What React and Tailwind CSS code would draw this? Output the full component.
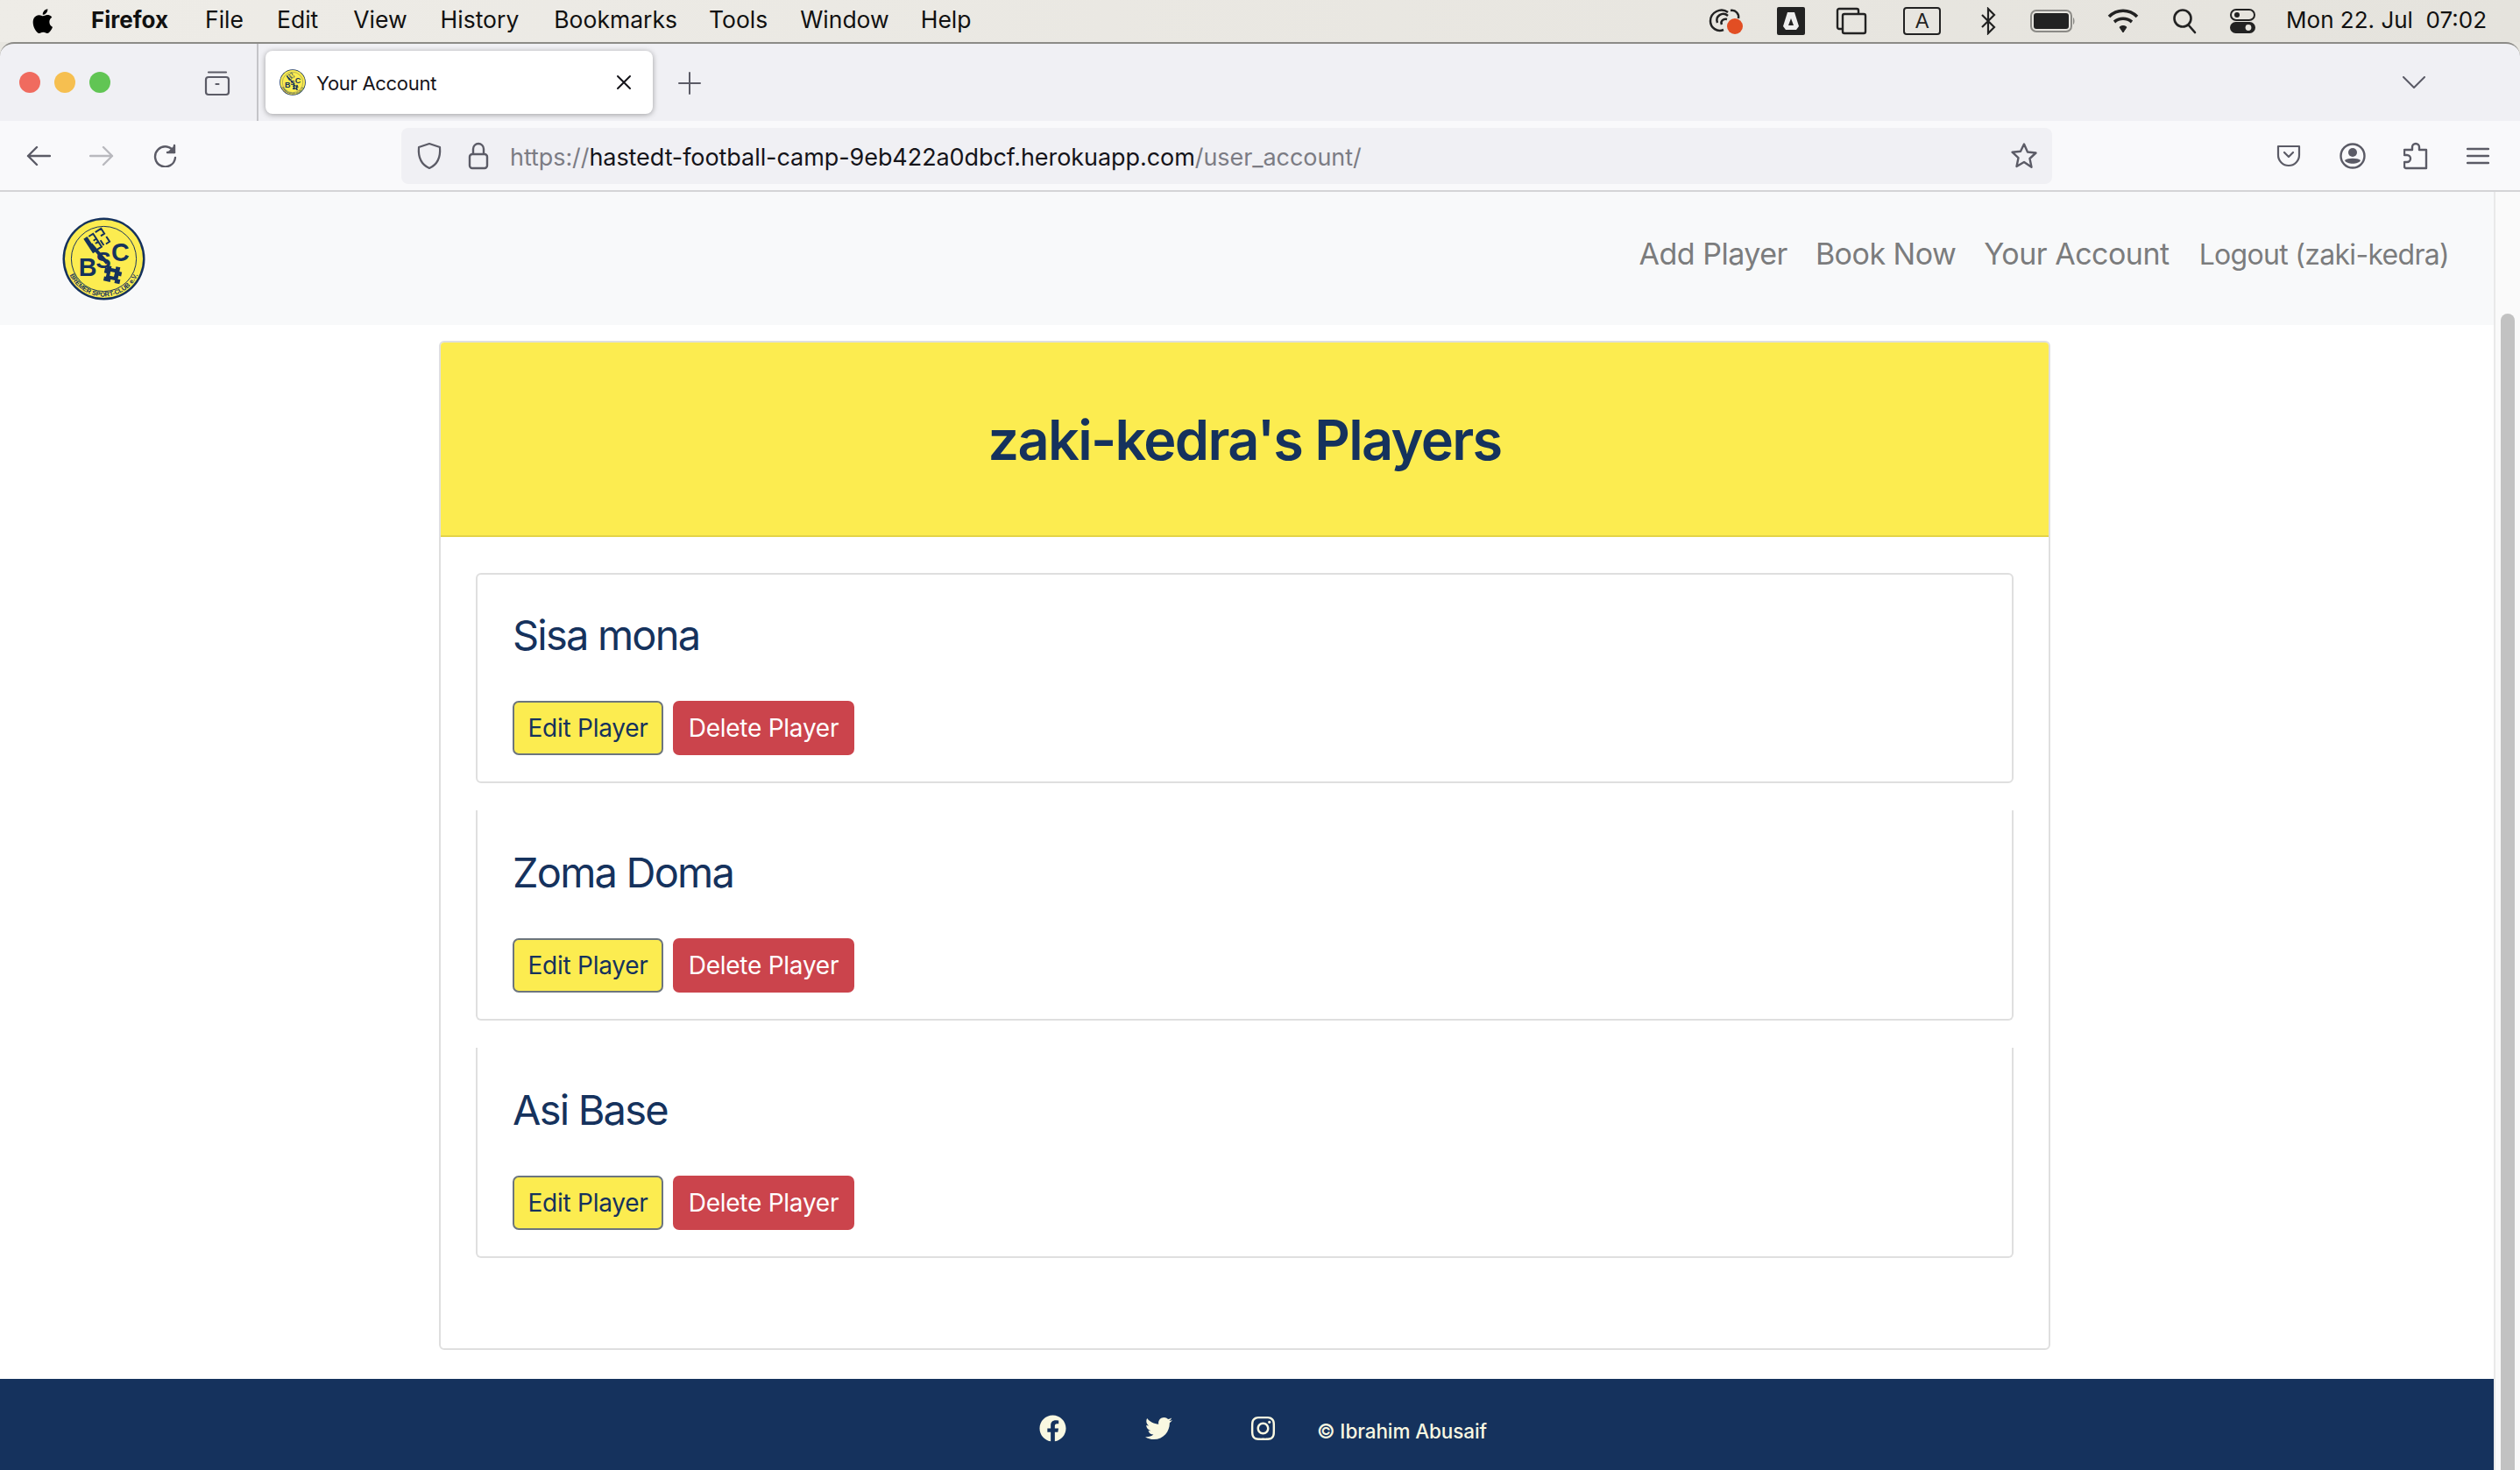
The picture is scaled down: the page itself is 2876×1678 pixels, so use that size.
import React from "react";
import {FaFacebook, FaInstagram, FaTwitter} from "react-icons/fa";

const navy = "#15325d";
const yellow = "#fcec50";

function Logo({size}) {
    return (
        <svg width={size} height={size} viewBox="0 0 96 96" className="shrink-0">
            <circle cx="48" cy="48" r="47.5" fill={navy} />
            <circle cx="48" cy="48" r="45" fill={yellow} />
            <circle cx="48" cy="48" r="37.5" fill="none" stroke={navy} strokeWidth="1" />
            <path d="M33 31l19 22" stroke={navy} strokeWidth="4" />
            <g transform="translate(40.5 26.5) rotate(-33)" fill="none" stroke={navy}>
                <path d="M-10 -10v20" strokeWidth="5" />
                <path d="M-6 -9h6v7h-4M0 -2v4M-6 9h6v-7h-4M3 -9h8v7h-5M6 9h5v-7M3 2v7" strokeWidth="2" />
            </g>
            <text x="19" y="68" fontFamily="Liberation Sans, sans-serif" fontWeight="700" fontSize="29" fill={navy}>B</text>
            <text x="39" y="58.5" fontFamily="Liberation Sans, sans-serif" fontWeight="700" fontSize="26" fill={navy}>S</text>
            <text x="56.5" y="50.5" fontFamily="Liberation Sans, sans-serif" fontWeight="700" fontSize="29" fill={navy}>C</text>
            <g transform="rotate(12 57.5 66.5)" fill={navy}>
                <path d="M50 57h5v2h5v-3h5v5h3v5h-3v4h3v5h-6v-3h-5v3h-8v-5h2v-4h-3v-6h2z" />
                <rect x="55" y="63" width="5" height="5" fill={yellow} />
            </g>
            <defs>
                <path id={`logo-arc-${size}`} d="M4.5 48A43.5 43.5 0 0 0 91.5 48" />
            </defs>
            <text fontFamily="Liberation Sans, sans-serif" fontWeight="700" fontSize="7.5" fill={navy}>
                <textPath href={`#logo-arc-${size}`} startOffset="50%" textAnchor="middle">BREMER SPORT-CLUB e.V.</textPath>
            </text>
        </svg>
    );
}

function Stroke({w, h, box, className, sw = 2, color = "#5b5b66", children}) {
    return (
        <svg width={w} height={h} viewBox={box} fill="none" stroke={color} strokeWidth={sw} strokeLinecap="round" strokeLinejoin="round" className={className}>
            {children}
        </svg>
    );
}

function MenuBar() {
    const items = [
        ["File", "ml-[42px]"], ["Edit", "ml-[38px]"], ["View", "ml-[40px]"], ["History", "ml-[38px]"],
        ["Bookmarks", "ml-[40px]"], ["Tools", "ml-[36px]"], ["Window", "ml-[37px]"], ["Help", "ml-[36px]"],
    ];
    return (
        <div className="h-[48px] flex items-center text-[26.5px] text-[#111] bg-gradient-to-r from-[#eeece7] to-[#e5e3dd]">
            <svg width="28" height="32" viewBox="0 0 24 28" className="ml-[36px]" fill="#000">
                <path d="M17.6 14.8c0-3 2.5-4.4 2.6-4.5-1.4-2.1-3.6-2.4-4.4-2.4-1.9-.2-3.6 1.1-4.6 1.1-.9 0-2.4-1.1-4-1-2 0-3.9 1.2-5 3-2.1 3.7-.5 9.2 1.5 12.2 1 1.5 2.2 3.1 3.8 3 1.5-.1 2.1-1 3.9-1s2.4 1 4 1c1.7 0 2.7-1.5 3.7-3 1.2-1.7 1.6-3.3 1.7-3.4-.1 0-3.2-1.2-3.2-5zM14.6 5.9c.8-1 1.4-2.4 1.2-3.9-1.2.1-2.7.8-3.6 1.9-.8.9-1.5 2.4-1.3 3.8 1.4.1 2.8-.7 3.7-1.8z" />
            </svg>
            <span className="ml-[40px] font-bold -mt-[3px] text-[26px]">Firefox</span>
            {items.map(([label, cls]) => <span key={label} className={`${cls} -mt-[3px]`}>{label}</span>)}
            <div className="ml-auto flex items-center">
                <svg width="42" height="34" viewBox="0 0 42 34" fill="none" stroke="#222" strokeWidth="2.5">
                    <path d="M24 7c-8-6-20 0-20 10 0 8 8 13 15 10" />
                    <path d="M27 5c6-1 10 4 9 9M12 19c-3-8 6-13 12-8M17 21c-2-4 2-7 6-6" />
                    <circle cx="32" cy="23" r="9" fill="#e24e23" stroke="none" />
                </svg>
                <svg width="32" height="32" viewBox="0 0 32 32" className="ml-[38px]">
                    <rect width="32" height="32" rx="2" fill="#222" />
                    <path d="M12 6h8l5 16-3 4H10l-3-4z" fill="#eee" />
                    <path d="M16 13l3 8h-6z" fill="#222" />
                </svg>
                <svg width="36" height="32" viewBox="0 0 36 32" fill="none" stroke="#222" strokeWidth="2.4" className="ml-[35px]">
                    <path d="M7 25H4a2 2 0 0 1-2-2V4a2 2 0 0 1 2-2h20a2 2 0 0 1 2 2v3" />
                    <rect x="8" y="8" width="26" height="22" rx="2" />
                </svg>
                <div className="ml-[41px] w-[43px] h-[32px] border-2 border-[#222] rounded-[4px] flex items-center justify-center text-[23px] font-['Liberation_Sans'] font-medium text-[#222]">A</div>
                <svg width="18" height="32" viewBox="0 0 18 32" fill="none" stroke="#222" strokeWidth="2.2" className="ml-[45px]">
                    <path d="M2 9l14 14-7 7V2l7 7L2 23" />
                </svg>
                <svg width="52" height="26" viewBox="0 0 52 26" className="ml-[39px]">
                    <rect x="1" y="1" width="46" height="24" rx="6" fill="none" stroke="#8b8a86" strokeWidth="2" />
                    <rect x="4" y="4" width="40" height="18" rx="3" fill="#222" />
                    <path d="M49 9c2 1 2 7 0 8z" fill="#8b8a86" />
                </svg>
                <svg width="36" height="30" viewBox="0 0 36 30" fill="none" stroke="#222" strokeWidth="3.6" className="ml-[36px]">
                    <path d="M2 10c9-9 23-9 32 0M8 16c6-5 14-5 20 0" />
                    <path d="M14 22c2-2 6-2 8 0l-4 6z" fill="#222" strokeWidth="1" />
                </svg>
                <Stroke w={28} h={30} box="0 0 28 30" color="#222" sw={2.6} className="ml-[38px]">
                    <circle cx="12" cy="12" r="9.5" />
                    <path d="M19 20l7 8" />
                </Stroke>
                <svg width="29" height="28" viewBox="0 0 29 28" className="ml-[38px]">
                    <rect x="1" y="1" width="27" height="12" rx="6" fill="none" stroke="#222" strokeWidth="2" />
                    <circle cx="8" cy="7" r="3" fill="#222" />
                    <rect y="15" width="29" height="13" rx="6.5" fill="#222" />
                    <circle cx="21" cy="21.5" r="3.4" fill="#e6e4de" />
                </svg>
                <span className="ml-[35px] mr-[38px] -mt-[3px] text-[26px] whitespace-pre">Mon 22. Jul  07:02</span>
            </div>
        </div>
    );
}

function TabStrip() {
    return (
        <div className="h-[90px] bg-[#f0f0f4] border-t-2 border-[#8c8b87] rounded-t-[16px] flex items-center">
            <span className="ml-[22px] w-[24px] h-[24px] rounded-full bg-[#f06b5f]" />
            <span className="ml-[16px] w-[24px] h-[24px] rounded-full bg-[#f6bf50]" />
            <span className="ml-[16px] w-[24px] h-[24px] rounded-full bg-[#61c554]" />
            <Stroke w={32} h={32} box="0 0 32 32" sw={2.2} className="ml-[106px]">
                <path d="M6 4.5h20" />
                <rect x="3" y="10" width="26" height="20" rx="3" />
                <path d="M14.5 18h3" />
            </Stroke>
            <div className="ml-[29px] w-[2px] h-full bg-[#c4c4c8]" />
            <div className="ml-[8px] w-[442px] h-[72px] bg-white rounded-[8px] shadow-[0_1px_6px_rgba(0,0,0,0.35)] flex items-center pl-[16px]">
                <Logo size={30} />
                <span className="ml-[12px] mt-[2px] text-[22px] tracking-[-0.3px] text-[#15141a] leading-none">Your Account</span>
                <Stroke w={18} h={18} box="0 0 18 18" color="#15141a" sw={2} className="ml-auto mr-[24px]">
                    <path d="M2 2l14 14M16 2L2 16" />
                </Stroke>
            </div>
            <Stroke w={26} h={26} box="0 0 26 26" sw={2} className="ml-[29px] mt-[2px]">
                <path d="M13 1v24M1 13h24" />
            </Stroke>
            <Stroke w={26} h={14} box="0 0 26 14" sw={2} className="ml-auto mr-[108px]">
                <path d="M1 1l12 12L25 1" />
            </Stroke>
        </div>
    );
}

function Toolbar() {
    return (
        <div className="h-[81px] bg-[#f9f9fb] border-b-2 border-[#d4d4d6] flex items-center">
            <Stroke w={28} h={24} box="0 0 28 24" sw={2.4} className="ml-[30px]">
                <path d="M27 12H2M12 2L2 12l10 10" />
            </Stroke>
            <Stroke w={28} h={24} box="0 0 28 24" sw={2.4} color="#b9b9be" className="ml-[44px]">
                <path d="M1 12h25M16 2l10 10-10 10" />
            </Stroke>
            <Stroke w={30} h={30} box="0 0 30 30" sw={2.4} className="ml-[44px] -mt-[3px]">
                <path d="M25 5v8h-8" fill="#5b5b66" />
                <path d="M25 13A11.5 11.5 0 1 0 26 19" />
            </Stroke>
            <div className="ml-[254px] w-[1884px] h-[64px] bg-[#f0f0f4] rounded-[8px] flex items-center">
                <Stroke w={30} h={32} box="0 0 30 32" sw={2.2} className="ml-[17px]">
                    <path d="M15 2l12 4c1 12-3 20-12 24C6 26 2 18 3 6z" />
                </Stroke>
                <svg width="24" height="32" viewBox="0 0 24 32" fill="none" stroke="#5b5b66" strokeWidth="2.4" className="ml-[29px]">
                    <path d="M6 14V8a6 6 0 0 1 12 0v6" />
                    <rect x="2" y="14" width="20" height="16" rx="3" />
                </svg>
                <div className="ml-[24px] mt-[3px] text-[27px] leading-none tracking-[-0.07px] text-[#7c7c84] whitespace-nowrap">
                    https://<span className="text-[#15141a]">hastedt-football-camp-9eb422a0dbcf.herokuapp.com</span>/user_account/
                </div>
                <Stroke w={32} h={32} box="0 0 32 32" sw={2.4} className="ml-auto mr-[16px]">
                    <path d="M16 2.5l4 9 9.5 1-7 6.5 2 9.8L16 23l-8.5 5 2-9.8-7-6.5 9.5-1z" />
                </Stroke>
            </div>
            <Stroke w={28} h={26} box="0 0 28 26" sw={2.2} className="ml-[256px]">
                <path d="M2 2h24v10a12 12 0 0 1-24 0z" />
                <path d="M9 9l5 5 5-5" />
            </Stroke>
            <svg width="30" height="30" viewBox="0 0 30 30" className="ml-[44px]">
                <circle cx="15" cy="15" r="13.5" fill="none" stroke="#5b5b66" strokeWidth="2.4" />
                <circle cx="15" cy="11" r="5" fill="#5b5b66" />
                <path d="M6 20c3-3 15-3 18 0-2 5-16 5-18 0z" fill="#5b5b66" />
            </svg>
            <Stroke w={28} h={32} box="0 0 28 32" sw={2.4} className="ml-[43px]">
                <path d="M3 30a2 2 0 0 1-2-2v-5h3a4 4 0 0 0 0-8H1V9h9V6a4 4 0 0 1 8 0v3h8v21z" />
            </Stroke>
            <Stroke w={26} h={20} box="0 0 26 20" sw={2.4} className="ml-[44px]">
                <path d="M1 2h24M1 10h24M1 18h24" />
            </Stroke>
        </div>
    );
}

function SiteNav() {
    const links = ["Add Player", "Book Now", "Your Account"];
    return (
        <div className="h-[152px] bg-[#f8f9fa] flex items-center pl-[71px] pr-[51px]">
            <Logo size={95} />
            <div className="ml-auto flex items-baseline gap-[32px] text-[34px] tracking-[-0.5px] text-[#7b7c7d] -mt-[12px]">
                {links.map((l) => <span key={l}>{l}</span>)}
                <span className="ml-[2px] text-[32px] tracking-[-0.7px]">Logout (zaki-kedra)</span>
            </div>
        </div>
    );
}

function PlayerCard({name, first}) {
    return (
        <div className={`h-[240px] border-2 border-[#dfdfdf] rounded-b-[6px] px-[40px] pt-[40px] ${first ? "rounded-t-[6px]" : "border-t-0"}`}>
            <h2 className={`text-[47px] tracking-[-1.8px] leading-[58px] text-[#15325d] ${first ? "" : "pt-[2px]"}`}>{name}</h2>
            <div className="mt-[46px] flex gap-[11px] text-[28px] tracking-[-0.25px]">
                <button className="w-[172px] h-[62px] bg-[#fcec50] border-2 border-[#6c757d] rounded-[7px] text-[#15325d]">Edit Player</button>
                <button className="w-[207px] h-[62px] bg-[#cb444c] rounded-[7px] text-white">Delete Player</button>
            </div>
        </div>
    );
}

export default function App() {
    return (
        <div className="h-[1678px] w-[2876px] overflow-hidden bg-[#e8e6e0] font-['Inter',sans-serif]">
            <MenuBar />
            <TabStrip />
            <Toolbar />
            <div className="flex h-[1459px]">
                <div className="w-[2846px] bg-white flex flex-col">
                    <SiteNav />
                    <div className="ml-[501px] w-[1839px] h-[1152px] mt-[18px] border-2 border-[#dfdfdf] rounded-[6px] overflow-hidden">
                        <div className="h-[222px] bg-[#fcec50] border-b-2 border-[#e3d348] flex items-center justify-center pt-[2px]">
                            <h1 className="text-[63px] tracking-[-1.7px] font-semibold text-[#15325d]">zaki-kedra's Players</h1>
                        </div>
                        <div className="px-[40px] pt-[41px] flex flex-col gap-[31px]">
                            <PlayerCard name="Sisa mona" first />
                            <PlayerCard name="Zoma Doma" />
                            <PlayerCard name="Asi Base" />
                        </div>
                    </div>
                    <div className="mt-[33px] flex-1 bg-[#15325d] flex items-center pl-[1186px] text-[#f9f8e1] pt-[8px]">
                        <FaFacebook size={31} />
                        <FaTwitter size={31} className="ml-[90px]" />
                        <FaInstagram size={31} className="ml-[88px]" />
                        <span className="ml-[46px] mt-[7px] text-[22.5px] tracking-[-0.1px] font-medium">© Ibrahim Abusaif</span>
                    </div>
                </div>
                <div className="flex-1 bg-[#fafafa] border-l-2 border-[#e9e9e9] pl-[6px] pt-[139px]">
                    <div className="w-[16px] h-full rounded-t-[8px] bg-[#c2c2c2]" />
                </div>
            </div>
        </div>
    );
}
